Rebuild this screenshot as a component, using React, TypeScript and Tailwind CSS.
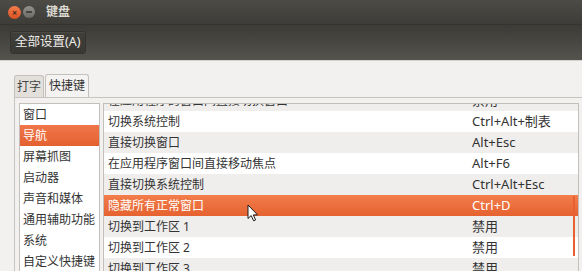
const categories = ['窗口', '导航', '屏幕抓图', '启动器', '声音和媒体', '通用辅助功能', '系统', '自定义快捷键']

const shortcuts = [
  { name: '在应用程序的窗口间直接切换窗口', keys: '禁用' },
  { name: '切换系统控制', keys: 'Ctrl+Alt+制表' },
  { name: '直接切换窗口', keys: 'Alt+Esc' },
  { name: '在应用程序窗口间直接移动焦点', keys: 'Alt+F6' },
  { name: '直接切换系统控制', keys: 'Ctrl+Alt+Esc' },
  { name: '隐藏所有正常窗口', keys: 'Ctrl+D' },
  { name: '切换到工作区 1', keys: '禁用' },
  { name: '切换到工作区 2', keys: '禁用' },
  { name: '切换到工作区 3', keys: '禁用' },
]

const selectedCategory = 1
const selectedShortcut = 5

const rowColor = (index: number) => {
  if (index === selectedShortcut) return 'bg-linear-to-b from-[#f27d4b] to-[#e5622f] text-white'
  if (index % 2 === 0) return 'bg-[#efeeed] text-[#333333]'
  return 'bg-white text-[#333333]'
}

const Cursor = () => (
  <svg className="absolute left-[247px] top-[204px]" width="12" height="18" viewBox="0 0 12 18">
    <path
      d="M1 1 L1 14.5 L4.2 11.6 L6.6 16.8 L8.6 15.9 L6.3 10.9 L10.6 10.9 Z"
      fill="#ffffff"
      stroke="#1a1a1a"
      strokeWidth="1"
      strokeLinejoin="round"
    />
  </svg>
)

export default function App() {
  return (
    <div className="relative h-[271px] w-[582px] overflow-hidden bg-[#f2f1f0] font-['Noto_Sans','Noto_Sans_CJK_SC',sans-serif] text-[12px]">
      {/* title bar */}
      <header className="flex h-[25px] items-center border-b border-[#35342f] bg-linear-to-b from-[#4c4b46] to-[#3d3c38] pl-[8px]">
        <span className="flex size-[13px] items-center justify-center rounded-full bg-linear-to-b from-[#f47e4c] to-[#d9501f] text-[9px] leading-none font-bold text-[#3a2a20]">
          ×
        </span>
        <span className="ml-[2px] flex size-[12px] items-center justify-center rounded-full bg-linear-to-b from-[#94928d] to-[#6c6a65]">
          <span className="h-[2px] w-[6px] bg-[#45443f]" />
        </span>
        <span className="ml-[11px] text-[12px] font-semibold text-[#dcd9d2]">键盘</span>
      </header>

      {/* toolbar */}
      <div className="flex h-[36px] items-center border-b border-[#d5d2cc] bg-linear-to-b from-[#3c3b37] to-[#55534e] pl-[10px]">
        <button className="flex h-[23px] items-center rounded-[3px] border border-[#34332f] bg-linear-to-b from-[#403f3a] to-[#393834] px-[4px] text-[12.5px] text-[#f0efeb] shadow-[inset_0_1px_0_rgba(255,255,255,0.06)]">
          全部设置(A)
        </button>
      </div>

      {/* notebook */}
      <div className="pt-[13px] pl-[14px]">
        <div className="flex h-[23px] items-end">
          <div className="flex h-[22px] items-center rounded-t-[3px] border border-b-0 border-[#c4c1bc] bg-[#e3e0dc] px-[2px] text-[#444444]">
            打字
          </div>
          <div className="ml-px flex h-[23px] items-center rounded-t-[3px] border border-b-0 border-[#c4c1bc] bg-[#f4f3f2] px-[3px] text-[#333333]">
            快捷键
          </div>
        </div>

        <div className="flex gap-[3px] border-t border-l border-[#c8c5c0] pt-[5px] pl-[4px]">
          <ul className="h-[200px] w-[81px] shrink-0 border border-[#c3c0bb] bg-white">
            {categories.map((item, index) => (
              <li
                key={item}
                className={`${index === selectedCategory ? 'bg-linear-to-b from-[#f0764a] to-[#e4612f] text-white' : 'text-[#333333]'} flex h-[21px] items-center pl-[3px]`}
              >
                {item}
              </li>
            ))}
          </ul>

          <div className="relative h-[200px] w-[476px] overflow-hidden border border-[#c3c0bb] bg-white">
            <ul className="mt-[-14px]">
              {shortcuts.map((row, index) => (
                <li key={row.name} className={`${rowColor(index)} flex h-[21px] items-center`}>
                  <span className="w-[368px] shrink-0 pl-[4px]">{row.name}</span>
                  <span className="text-[13px]">{row.keys}</span>
                </li>
              ))}
            </ul>
            <span className="absolute top-[92px] right-[3px] h-[60px] w-[2px] bg-[#e9612e]" />
          </div>
        </div>
      </div>

      <Cursor />
    </div>
  )
}
